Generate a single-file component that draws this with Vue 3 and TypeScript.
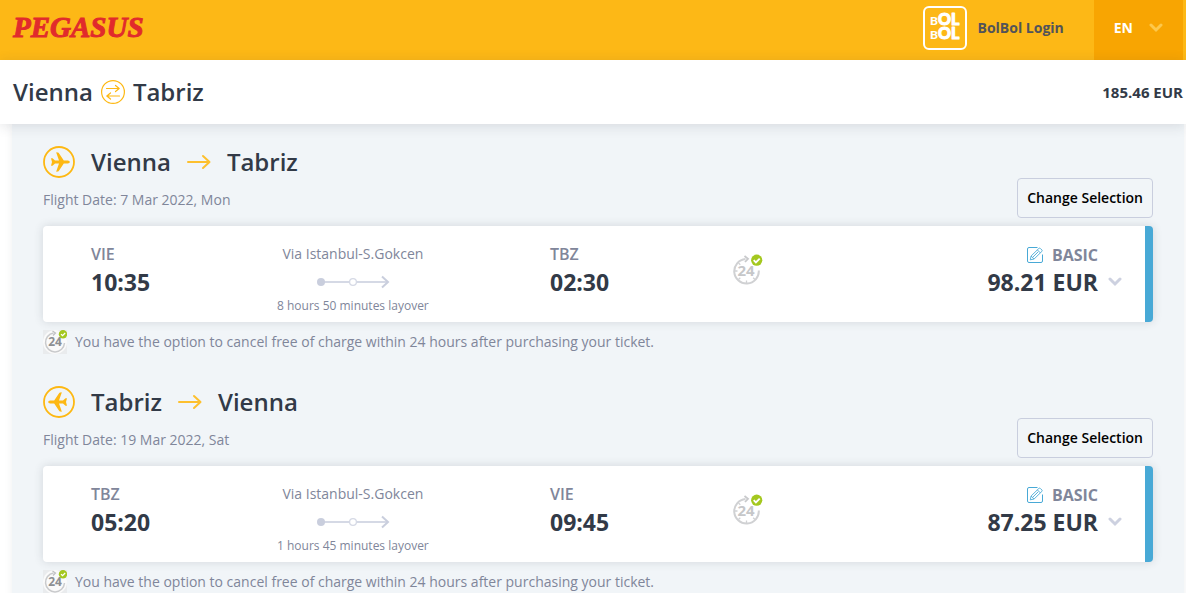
<script setup lang="ts">
interface Flight {
  from: string
  to: string
  date: string
  depCode: string
  depTime: string
  arrCode: string
  arrTime: string
  via: string
  layover: string
  price: string
  inbound: boolean
}

const flights: Flight[] = [
  {
    from: 'Vienna', to: 'Tabriz', date: '7 Mar 2022, Mon',
    depCode: 'VIE', depTime: '10:35', arrCode: 'TBZ', arrTime: '02:30',
    via: 'Via Istanbul-S.Gokcen', layover: '8 hours 50 minutes layover',
    price: '98.21 EUR', inbound: false,
  },
  {
    from: 'Tabriz', to: 'Vienna', date: '19 Mar 2022, Sat',
    depCode: 'TBZ', depTime: '05:20', arrCode: 'VIE', arrTime: '09:45',
    via: 'Via Istanbul-S.Gokcen', layover: '1 hours 45 minutes layover',
    price: '87.25 EUR', inbound: true,
  },
]
</script>

<template>
  <div class="page">
    <header class="topbar">
      <a href="#" class="logo">PEGASUS</a>
      <a href="#" class="login">
        <svg class="bolbol" width="44" height="44" viewBox="0 0 44 44" aria-hidden="true">
          <rect x="1" y="1" width="42" height="42" rx="5" fill="none" stroke="#fff" stroke-width="2" />
          <text x="7" y="19"><tspan class="lead">B</tspan><tspan>OL</tspan></text>
          <text x="7" y="33"><tspan class="lead">B</tspan><tspan>OL</tspan></text>
        </svg>
        <span class="login-label">BolBol Login</span>
      </a>
      <button type="button" class="lang">
        EN
        <svg width="14" height="10" viewBox="0 0 14 10" aria-hidden="true">
          <path d="M2 2l5 5 5-5" fill="none" stroke="#fdc84b" stroke-width="3" stroke-linecap="round" />
        </svg>
      </button>
    </header>

    <div class="summary">
      <h1 class="trip">
        <span>Vienna</span>
        <svg width="24" height="24" viewBox="0 0 24 24" aria-label="round trip">
          <g fill="none" stroke="#fdb813" stroke-linecap="round" stroke-linejoin="round">
            <circle cx="12" cy="12" r="11.4" stroke-width="1.2" />
            <path d="M5.500 8.500H18M14.500 5.500l3.700 3-3.700 3M18.500 16H6M9.500 13l-3.700 3 3.700 3" stroke-width="1.200" />
          </g>
        </svg>
        <span>Tabriz</span>
      </h1>
      <strong class="total">185.46 EUR</strong>
    </div>

    <main class="panel">
      <section v-for="f in flights" :key="f.depCode" class="flight">
        <div class="head">
          <div>
            <h2 class="route">
              <svg width="32" height="32" viewBox="0 0 32 32" aria-hidden="true">
                <circle cx="16" cy="16" r="15" fill="none" stroke="#fdb813" stroke-width="1.800" />
                <path
                  :transform="f.inbound ? 'translate(32 0) scale(-1 1)' : undefined"
                  d="M8 12.300h1.500l2.500 2.300 4-.1-2.700-7.700c-.1-.4.1-.6.5-.5l1.800.4 5.200 7.800 4 .1c1.200.1 2 .7 2 1.400s-.8 1.300-2 1.400l-4 .1-5.200 7.800-1.800.4c-.4.1-.6-.1-.5-.5l2.700-7.700-4-.1-2.500 2.300H8l1-3.700z"
                  fill="#fdb813"
                />
              </svg>
              <span>{{ f.from }}</span>
              <svg width="24" height="16" viewBox="0 0 24 16" aria-label="to">
                <path d="M1 8h21M16 2l6.500 6-6.500 6" fill="none" stroke="#fdc02e" stroke-width="2" stroke-linecap="round" stroke-linejoin="round" />
              </svg>
              <span>{{ f.to }}</span>
            </h2>
            <p class="date">Flight Date: {{ f.date }}</p>
          </div>
          <button type="button" class="change">Change Selection</button>
        </div>

        <article class="card">
          <div class="stop">
            <span class="code">{{ f.depCode }}</span>
            <span class="time">{{ f.depTime }}</span>
          </div>
          <div class="leg">
            <span class="via">{{ f.via }}</span>
            <svg class="track" width="74" height="14" viewBox="0 0 74 14" aria-hidden="true">
              <path d="M4 7h68" stroke="#d5d9e5" stroke-width="2" />
              <path d="M66 1.500L72 7l-6 5.500" fill="none" stroke="#c9cedd" stroke-width="2" />
              <circle cx="5" cy="7" r="4" fill="#c9cedd" />
              <circle cx="37" cy="7" r="3.400" fill="#fff" stroke="#d5d9e5" stroke-width="1.300" />
            </svg>
            <span class="layover">{{ f.layover }}</span>
          </div>
          <div class="stop">
            <span class="code">{{ f.arrCode }}</span>
            <span class="time">{{ f.arrTime }}</span>
          </div>
          <svg class="badge" width="30" height="32" viewBox="0 0 30 32" aria-label="24 hours">
            <path d="M12.500 5A12.300 12.300 0 1 0 25.800 16.500" fill="none" stroke="#d0d1d3" stroke-width="2" />
            <path d="M11.500 2l3.500 2.800-3 3.200" fill="none" stroke="#c8c9cb" stroke-width="1.800" />
            <path d="M2 17h2.500M13.500 29v-2.500M5.500 25.500l1.800-1.800M22 25.500l-1.800-1.800M5.500 9l1.800 1.800" stroke="#d0d1d3" stroke-width="1.300" />
            <text x="13" y="22" text-anchor="middle" class="num">24</text>
            <circle cx="23.700" cy="6.200" r="5.600" fill="#a4c81f" />
            <path d="M20.700 6.200l2.200 2.200 3.800-3.800" fill="none" stroke="#fff" stroke-width="1.900" />
          </svg>
          <div class="fare">
            <div class="amount">
              <span class="bundle">
                <svg width="16" height="16" viewBox="0 0 16 16" aria-hidden="true">
                  <g fill="none" stroke="#48a9d6" stroke-linejoin="round">
                    <path d="M10.500 .5H2Q.5.500.5 2v12q0 1.500 1.500 1.500h12q1.500 0 1.500-1.500V7.500" />
                    <path d="M3.300 12.800l.8-3.800 7.800-7.600q.7-.6 1.400 0l1.600 1.600q.6.700 0 1.400L7.100 12zM4.100 9l3 3M10.400 2.900l3 3M5.700 10.300l5.500-5.500" stroke-width=".9" />
                  </g>
                </svg>
                BASIC
              </span>
              <span class="price">{{ f.price }}</span>
            </div>
            <button type="button" class="expand" aria-label="Show details">
              <svg width="14" height="10" viewBox="0 0 14 10" aria-hidden="true">
                <path d="M2 2l5 5 5-5" fill="none" stroke="#cdd1e0" stroke-width="3" stroke-linecap="round" />
              </svg>
            </button>
          </div>
        </article>

        <p class="notice">
          <svg width="24" height="24" viewBox="0 0 24 24" aria-hidden="true">
            <rect width="24" height="24" fill="#e9ebed" />
            <circle cx="12" cy="12" r="12" fill="#fafafa" />
            <path d="M10.500 3A9.500 9.500 0 1 0 21.500 13" fill="none" stroke="#c9cacc" stroke-width="1.500" />
            <path d="M9.500 1l3 2-2.500 2.500" fill="none" stroke="#bfc0c2" stroke-width="1.200" />
            <text x="12" y="16" text-anchor="middle" class="num small">24</text>
            <circle cx="20" cy="4.200" r="4.200" fill="#a4c81f" />
            <path d="M18 4.200l1.500 1.500 2.700-2.700" fill="none" stroke="#fff" stroke-width="1.200" />
          </svg>
          <span>You have the option to cancel free of charge within 24 hours after purchasing your ticket.</span>
        </p>
      </section>
    </main>
  </div>
</template>

<style>
body {
  margin: 0;
  overflow: hidden;
}
</style>

<style scoped>
.page {
  height: 100vh;
  overflow: hidden;
  background: #fff;
  color: #323a47;
  font-family: 'Open Sans', 'Noto Sans', sans-serif;
}
.page * {
  box-sizing: border-box;
}
h1, h2, p {
  margin: 0;
}
button {
  font-family: inherit;
  cursor: pointer;
}
a {
  text-decoration: none;
}
svg {
  flex: none;
  display: block;
}

.topbar {
  display: flex;
  align-items: center;
  height: 60px;
  padding: 0 3px 0 13px;
  background: #fdb816;
}
.logo {
  flex: 1;
  padding-bottom: 6px;
  color: #e12b2c;
  font: italic 700 29px/32px 'Liberation Serif', serif;
  -webkit-text-stroke: 1px #e12b2c;
}
.login {
  display: flex;
  align-items: center;
  gap: 10px;
  margin-right: 30px;
  padding-bottom: 4px;
  color: #525359;
  font-size: 14px;
  font-weight: 700;
}
.login-label {
  padding-bottom: 2px;
}
.bolbol text {
  fill: #fff;
  stroke: #fff;
  stroke-width: 1px;
  stroke-linejoin: round;
  font-family: Lato, 'Open Sans', sans-serif;
  font-size: 16px;
  font-weight: 900;
}
.bolbol .lead {
  font-size: 12px;
  stroke-width: 0;
}
.lang {
  display: flex;
  align-items: center;
  gap: 16px;
  height: 60px;
  padding: 0 20px 5px;
  border: 0;
  background: #f8a502;
  color: #fff;
  font-size: 14px;
  font-weight: 700;
}

.summary {
  position: relative;
  display: flex;
  align-items: center;
  justify-content: space-between;
  height: 64px;
  padding: 0 3px 0 13px;
  background: #fff;
  box-shadow: 0 2px 12px rgba(50, 58, 71, 0.14);
}
.trip {
  display: flex;
  align-items: center;
  gap: 8px;
  font-size: 24px;
  font-weight: 600;
  line-height: 32px;
}
.total {
  padding-bottom: 1px;
  font-size: 15px;
  font-weight: 700;
}

.panel {
  margin: 0 2px 0 12px;
  padding: 22px 31px 0;
  background: #f1f5f8;
  box-shadow: 0 0 8px rgba(50, 58, 71, 0.08);
}
.flight {
  padding-bottom: 32px;
}
.head {
  display: flex;
  align-items: flex-end;
  justify-content: space-between;
  height: 72px;
  margin-bottom: 8px;
}
.head > div {
  align-self: flex-start;
}
.route {
  display: flex;
  align-items: center;
  gap: 16px;
  font-size: 24px;
  font-weight: 600;
  line-height: 32px;
}
.date {
  margin-top: 12px;
  color: #80869a;
  font-size: 14px;
  line-height: 20px;
}
.change {
  height: 40px;
  padding: 0 9px 2px;
  border: 1px solid #c9cede;
  border-radius: 4px;
  background: transparent;
  color: #000;
  font-size: 14px;
  font-weight: 600;
}

.card {
  display: grid;
  grid-template-columns: 186fr 273fr 183fr 389fr;
  height: 96px;
  padding: 0 23px 0 48px;
  border-right: 8px solid #48a9d6;
  border-radius: 4px;
  background: #fff;
  box-shadow: 0 0 10px rgba(50, 58, 71, 0.16);
}
.card > * {
  grid-row: 1;
}
.stop {
  display: flex;
  flex-direction: column;
  padding-top: 16px;
}
.code,
.bundle {
  color: #80869a;
  font-size: 16px;
  font-weight: 600;
  line-height: 24px;
}
.time,
.price {
  font-size: 23px;
  font-weight: 700;
  line-height: 32px;
}
.leg {
  display: flex;
  flex-direction: column;
  align-items: center;
  justify-self: start;
  padding-top: 18px;
  color: #80869a;
}
.via {
  font-size: 14px;
  line-height: 20px;
}
.track {
  margin: 11px 0 9px;
}
.layover {
  font-size: 12px;
  line-height: 16px;
}
.badge {
  grid-column: 4;
  margin-top: 28px;
}
.num {
  fill: #c6c7c9;
  font-size: 15px;
  font-weight: 700;
}
.num.small {
  fill: #8d8f92;
  font-size: 12px;
}
.fare {
  display: flex;
  grid-column: 4;
  justify-self: end;
  align-items: flex-start;
  gap: 10px;
  padding-top: 16px;
}
.amount {
  display: flex;
  flex-direction: column;
  align-items: flex-end;
}
.bundle {
  display: flex;
  align-items: center;
  gap: 9px;
  padding-top: 1px;
  font-weight: 700;
}
.price {
  line-height: 30px;
}
.expand {
  margin-top: 35px;
  padding: 0;
  border: 0;
  background: none;
}
.notice {
  display: flex;
  align-items: center;
  gap: 8px;
  height: 24px;
  margin-top: 8px;
  color: #80869a;
  font-size: 14px;
}
.notice span {
  padding-bottom: 2px;
}
</style>
